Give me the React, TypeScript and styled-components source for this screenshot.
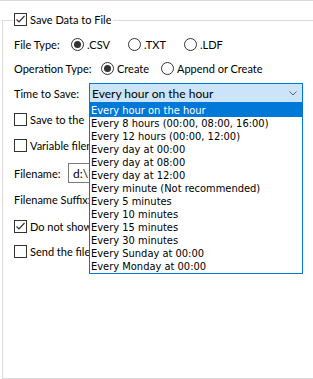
import React from "react";
import styled, { createGlobalStyle } from "styled-components";

const GlobalStyle = createGlobalStyle`
  html, body { margin: 0; padding: 0; background: #ffffff; overflow: hidden; }
  body { font-family: Lato, "Noto Sans", sans-serif; font-size: 11px; color: #000000; }
`;

const Page = styled.div`
  height: 379px;
  box-sizing: border-box;
  border-top: 1px solid #dadada;
  padding-top: 19px;
  overflow: hidden;
`;

const GroupBox = styled.div`
  box-sizing: border-box;
  height: 359px;
  margin-left: 2px;
  margin-right: -20px;
  border: 1px solid #dcdcdc;
  padding-left: 10px;
`;

const Legend = styled.div`
  display: flex;
  align-items: center;
  width: fit-content;
  height: 13px;
  margin-top: -8px;
  padding: 0 2px 0 1px;
  background: #ffffff;
`;

const Body = styled.div`
  display: flex;
  flex-direction: column;
  margin-top: 6px;
  padding-left: 1px;
`;

const Row = styled.div<{ $h: number }>`
  display: flex;
  align-items: center;
  height: ${(p) => p.$h}px;
`;

const Label = styled.span<{ $w?: number }>`
  flex: none;
  width: ${(p) => (p.$w ? `${p.$w}px` : "auto")};
  line-height: 13px;
  white-space: nowrap;
  overflow: hidden;
`;

const BoxMark = styled.span`
  flex: none;
  box-sizing: border-box;
  width: 13px;
  height: 13px;
  border: 1px solid #333333;
  background: #ffffff;
  display: flex;
  align-items: center;
  justify-content: center;
  margin-right: 3px;
`;

const RadioMark = styled.span<{ $on?: boolean }>`
  flex: none;
  box-sizing: border-box;
  width: 13px;
  height: 13px;
  border: 1px solid #333333;
  border-radius: 50%;
  background: #ffffff;
  display: flex;
  align-items: center;
  justify-content: center;
  margin-right: 3px;
  &::after {
    content: "";
    display: ${(p) => (p.$on ? "block" : "none")};
    width: 7px;
    height: 7px;
    border-radius: 50%;
    background: #333333;
  }
`;

const Option = styled.span<{ $w?: number }>`
  flex: none;
  display: flex;
  align-items: center;
  width: ${(p) => (p.$w ? `${p.$w}px` : "auto")};
`;

const ComboWrap = styled.div`
  position: relative;
  flex: none;
  width: 214px;
`;

const Combo = styled.div`
  box-sizing: border-box;
  height: 20px;
  border: 1px solid #0078d7;
  background: #cce4f7;
  display: flex;
  align-items: center;
  justify-content: space-between;
  padding: 0 5px 0 2px;
  font-size: 12px;
`;

const DropList = styled.ul`
  position: absolute;
  z-index: 5;
  left: 0;
  top: 20px;
  width: 214px;
  box-sizing: border-box;
  margin: 0;
  padding: 0;
  list-style: none;
  border: 1px solid #0078d7;
  background: #ffffff;
  font-family: "DejaVu Sans Condensed", "Liberation Sans", sans-serif;
  font-size: 11px;
`;

const Item = styled.li<{ $sel?: boolean }>`
  height: 13px;
  line-height: 13px;
  padding-left: 1px;
  white-space: nowrap;
  background: ${(p) => (p.$sel ? "#0078d7" : "transparent")};
  color: ${(p) => (p.$sel ? "#ffffff" : "#000000")};
`;

const TextBox = styled.div`
  flex: none;
  box-sizing: border-box;
  width: 22px;
  height: 20px;
  border: 1px solid #7a7a7a;
  border-right: none;
  display: flex;
  align-items: center;
  padding-left: 4px;
  font-size: 12px;
  white-space: nowrap;
  overflow: hidden;
`;

const Check = ({ on }: { on?: boolean }) => (
  <BoxMark>
    {on && (
      <svg width="11" height="11" viewBox="0 0 11 11">
        <polyline points="1.5,5.5 4,8 9.5,2" fill="none" stroke="#333333" strokeWidth="1.2" />
      </svg>
    )}
  </BoxMark>
);

const Chevron = () => (
  <svg width="8" height="5" viewBox="0 0 8 5">
    <polyline points="0.5,0.5 4,4 7.5,0.5" fill="none" stroke="#606060" strokeWidth="1" />
  </svg>
);

const options = [
  "Every hour on the hour",
  "Every 8 hours (00:00, 08:00, 16:00)",
  "Every 12 hours (00:00, 12:00)",
  "Every day at 00:00",
  "Every day at 08:00",
  "Every day at 12:00",
  "Every minute (Not recommended)",
  "Every 5 minutes",
  "Every 10 minutes",
  "Every 15 minutes",
  "Every 30 minutes",
  "Every Sunday at 00:00",
  "Every Monday at 00:00",
];

export default function App() {
  return (
    <>
      <GlobalStyle />
      <Page>
        <GroupBox>
          <Legend>
            <Check on />
            <Label>Save Data to File</Label>
          </Legend>
          <Body>
            <Row $h={25}>
              <Label $w={57}>File Type:</Label>
              <Option $w={57}><RadioMark $on />.CSV</Option>
              <Option $w={56}><RadioMark />.TXT</Option>
              <Option><RadioMark />.LDF</Option>
            </Row>
            <Row $h={23}>
              <Label $w={87}>Operation Type:</Label>
              <Option $w={60}><RadioMark $on />Create</Option>
              <Option><RadioMark />Append or Create</Option>
            </Row>
            <Row $h={26}>
              <Label $w={75}>Time to Save:</Label>
              <ComboWrap>
                <Combo>
                  <span>Every hour on the hour</span>
                  <Chevron />
                </Combo>
                <DropList>
                  {options.map((o, i) => (
                    <Item key={o} $sel={i === 0}>{o}</Item>
                  ))}
                </DropList>
              </ComboWrap>
            </Row>
            <Row $h={27}>
              <Check />
              <Label $w={59}>Save to the</Label>
            </Row>
            <Row $h={25}>
              <Check />
              <Label $w={59}>Variable filename</Label>
            </Row>
            <Row $h={30}>
              <Label $w={54}>Filename:</Label>
              <TextBox>d:\Data</TextBox>
            </Row>
            <Row $h={22}>
              <Label $w={75}>Filename Suffix:</Label>
            </Row>
            <Row $h={33}>
              <Check on />
              <Label $w={59}>Do not show</Label>
            </Row>
            <Row $h={17}>
              <Check />
              <Label $w={59}>Send the file</Label>
            </Row>
          </Body>
        </GroupBox>
      </Page>
    </>
  );
}
